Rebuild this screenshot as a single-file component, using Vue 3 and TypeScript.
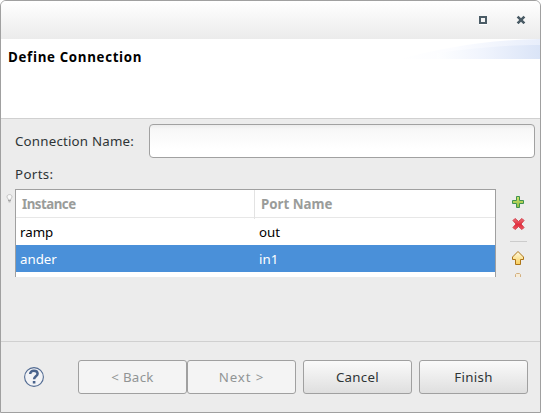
<script setup lang="ts">
import { ref } from 'vue'

interface Port {
  instance: string
  port: string
}

const connectionName = ref('')
const selected = ref(1)
const ports: Port[] = [
  { instance: 'ramp', port: 'out' },
  { instance: 'ander', port: 'in1' },
]
</script>

<template>
  <div class="window">
    <header class="titlebar">
      <button class="control" aria-label="Maximize">
        <svg width="10" height="10" viewBox="0 0 10 10" shape-rendering="crispEdges">
          <path d="M1 9h8v1H1z" fill="#fff" />
          <path d="M1 1h8v8H1zM3 3v4h4V3z" fill="#4b5c66" fill-rule="evenodd" />
        </svg>
      </button>
      <button class="control" aria-label="Close">
        <svg width="10" height="10" viewBox="0 0 10 10">
          <path d="M1.7 2.7l6.6 6.6M8.3 2.7L1.7 9.3" stroke="#fff" stroke-width="2.2" />
          <path d="M1.6 1.6l6.8 6.8M8.4 1.6L1.6 8.4" stroke="#4b5c66" stroke-width="2.6" />
        </svg>
      </button>
    </header>

    <section class="banner">
      <h1>Define Connection</h1>
      <svg class="swoosh" width="141" height="20" viewBox="0 0 141 20">
        <defs>
          <linearGradient id="pale" x1="0" x2="1">
            <stop offset="0" stop-color="#fff" />
            <stop offset="0.4" stop-color="#fbfcff" />
            <stop offset="1" stop-color="#e8eefb" />
          </linearGradient>
          <linearGradient id="deep" x1="0" x2="1">
            <stop offset="0" stop-color="#fdfeff" />
            <stop offset="0.45" stop-color="#f0f4fd" />
            <stop offset="1" stop-color="#dae4f7" />
          </linearGradient>
        </defs>
        <path d="M0 20C40 10 85 1 141 0V20z" fill="url(#pale)" />
        <path d="M38 20V14C75 9 105 6 141 6V20z" fill="url(#deep)" />
      </svg>
    </section>

    <main class="content">
      <div class="name-row">
        <label for="name">Connection Name:</label>
        <input id="name" v-model="connectionName" type="text" />
      </div>
      <div class="ports-label">Ports:</div>
      <div class="ports">
        <svg class="bulb" width="7" height="9" viewBox="0 0 7 9">
          <path d="M2.3 6V5C.4 3.5.7.6 3.5.6s3.1 2.9 1.2 4.4v1z" fill="#fafafa" stroke="#bbb" stroke-width=".9" />
          <path d="M2 6.5h3M2.500 7.800h2" stroke="#a5a5a5" />
        </svg>
        <div class="table">
          <div class="row head">
            <span class="cell instance-head">Instance</span>
            <span class="cell">Port Name</span>
          </div>
          <div
            v-for="(p, i) in ports"
            :key="p.instance"
            class="row"
            :class="{ selected: i === selected }"
            @click="selected = i"
          >
            <span class="cell">{{ p.instance }}</span>
            <span class="cell">{{ p.port }}</span>
          </div>
        </div>
        <div class="tools">
          <svg width="18" height="88" viewBox="0 0 18 88">
            <defs>
              <linearGradient id="green" x2="0" y2="1">
                <stop offset="0" stop-color="#d3e46a" />
                <stop offset="1" stop-color="#8fbd42" />
              </linearGradient>
              <linearGradient id="red" x2="0" y2="1">
                <stop offset="0" stop-color="#ef737c" />
                <stop offset=".55" stop-color="#e32c3c" />
                <stop offset="1" stop-color="#ee5a65" />
              </linearGradient>
              <linearGradient id="gold" x2="0" y2="1">
                <stop offset="0" stop-color="#fffbe0" />
                <stop offset="1" stop-color="#f9cf5c" />
              </linearGradient>
            </defs>
            <path d="M6.5 7.5h3v4h4v3h-4v4h-3v-4h-4v-3h4z" fill="url(#green)" stroke="#3f9350" />
            <path d="M5 29.5l3.500 3 3.500-3 2 2-3 3.500 3 3.500-2 2-3.500-3-3.500 3-2-2 3-3.500-3-3.500z" fill="url(#red)" stroke="#d23c48" />
            <path d="M0 52.5h17" stroke="#ccc" />
            <path d="M8 62.500l5.500 5.500v2.500h-3v5h-5v-5h-3V68z" fill="url(#gold)" stroke="#ad7418" />
            <path d="M5.500 88v-2.500l1-1h3l1 1V88" fill="#f6ecd8" stroke="#d3b080" />
          </svg>
        </div>
      </div>
    </main>

    <footer class="footer">
      <svg class="help" width="22" height="22" viewBox="0 0 22 22">
        <circle cx="11" cy="11" r="9.400" fill="#f2f3f6" stroke="#526b92" stroke-width="1.100" />
        <path d="M7.200 8.100C7.200 5.900 8.700 4.700 10.900 4.700s3.700 1.200 3.700 3.100c0 2.500-3.500 2.600-3.500 5.500" fill="none" stroke="#49638c" stroke-width="2.500" />
        <path d="M9.800 15h2.600v2.500H9.800z" fill="#49638c" />
      </svg>
      <div class="buttons">
        <button class="btn" disabled>&lt; Back</button>
        <button class="btn next" disabled>Next &gt;</button>
        <button class="btn spaced">Cancel</button>
        <button class="btn spaced">Finish</button>
      </div>
    </footer>
  </div>
</template>

<style>
body {
  background: #fff;
}
</style>

<style scoped>
.window {
  box-sizing: border-box;
  width: 541px;
  height: 413px;
  display: flex;
  flex-direction: column;
  border: 1px solid #a0a0a0;
  border-radius: 6px 6px 0 0;
  background: #ececec;
  overflow: hidden;
  color: #2e3436;
  font: 13.3px/20px "Noto Sans", "Open Sans", sans-serif;
}
button {
  padding: 0;
  font: inherit;
}
.titlebar {
  flex: 0 0 38px;
  display: flex;
  justify-content: flex-end;
  align-items: center;
  gap: 28px;
  padding-right: 14px;
  background: linear-gradient(#fff, #ebebeb);
}
.control {
  width: 10px;
  height: 10px;
  border: 0;
  background: none;
}
.control svg {
  display: block;
}
.banner {
  flex: 0 0 79px;
  display: flex;
  justify-content: space-between;
  background: #fff;
  border-bottom: 1px solid #d0d0d0;
}
h1 {
  margin: 8px 0 0 7px;
  color: #000;
  font: bold 13.3px/20px "Open Sans", "Noto Sans", sans-serif;
  letter-spacing: 0.68px;
}
.content {
  flex: 0 0 222px;
  padding: 5px 5px 0 7px;
  box-sizing: border-box;
}
.name-row {
  display: flex;
  align-items: center;
}
.name-row label {
  width: 134px;
  padding-left: 7px;
  box-sizing: border-box;
  letter-spacing: 0.2px;
  white-space: nowrap;
}
input {
  flex: 1;
  min-width: 0;
  height: 34px;
  margin-left: 7px;
  box-sizing: border-box;
  border: 1px solid #a1a1a1;
  border-radius: 4px;
  background: linear-gradient(#ededed, #f7f7f7 4px, #fff 24px);
  font: inherit;
  outline: none;
}
.ports-label {
  height: 31px;
  line-height: 33px;
  padding-left: 7px;
  letter-spacing: 0.35px;
}
.ports {
  display: flex;
  height: 88px;
}
.bulb {
  width: 7px;
  margin: 5px 0 0 -2px;
}
.table {
  width: 481px;
  margin-left: 2px;
  box-sizing: border-box;
  border: 1px solid #a0a0a0;
  border-bottom: 0;
  background: #fff;
  color: #000;
}
.row {
  height: 27px;
  display: grid;
  grid-template-columns: 239px 1fr;
  line-height: 29px;
}
.cell {
  padding-left: 4px;
}
.head {
  height: 28px;
  box-sizing: border-box;
  border-bottom: 1px solid #e7e7e7;
  line-height: 29px;
  font-weight: bold;
  color: #9a9c9a;
}
.head .cell {
  padding-left: 6px;
}
.head .instance-head {
  border-right: 1px solid #e3e3e3;
  letter-spacing: -0.5px;
}
.selected {
  background: #4a90d9;
  color: #fff;
}
.tools {
  margin-left: 14px;
}
.tools svg {
  display: block;
}
.footer {
  flex: 1;
  display: flex;
  align-items: flex-start;
  border-top: 1px solid #d0d0d0;
}
.help {
  margin: 24px 33px 0 22px;
}
.buttons {
  display: flex;
  margin-top: 18px;
}
.btn {
  width: 109px;
  height: 34px;
  border: 1px solid #a0a0a0;
  border-radius: 3px;
  background: linear-gradient(#fafafa, #dfdfdf);
  color: #2e3436;
  letter-spacing: 0.3px;
}
.btn:disabled {
  background: #f4f4f4;
  color: #919494;
}
.next {
  letter-spacing: 0.9px;
}
.spaced {
  margin-left: 7px;
}
</style>
